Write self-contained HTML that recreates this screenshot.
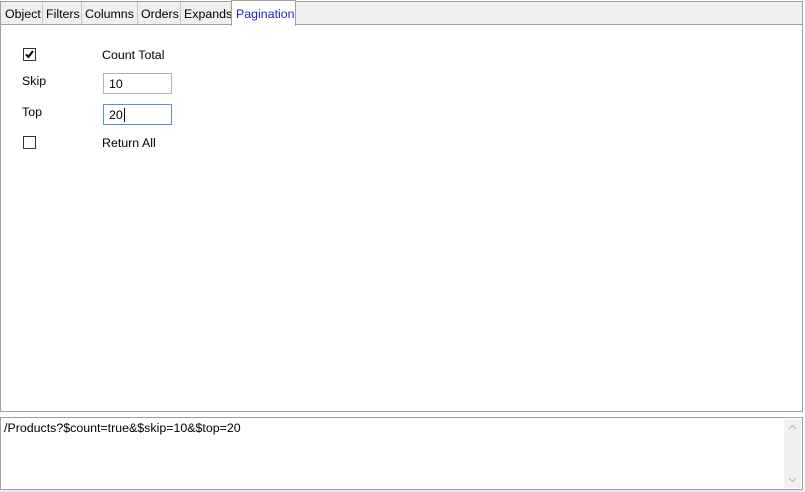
<!DOCTYPE html>
<html><head><style>
*{box-sizing:border-box;margin:0;padding:0}
body{width:805px;height:492px;background:#fff;font-family:"Liberation Sans",sans-serif;font-size:12.4px;color:#000;position:relative;overflow:hidden}
.strip{position:absolute;left:0;top:1px;width:803px;height:24px;background:#efefef;border:1px solid #a0a0a0;border-bottom:none}
.tab{position:absolute;top:2px;height:22px;border-right:1px solid #c8c8c8;padding-left:4px;line-height:24px;color:#000}
.sel{position:absolute;top:0;height:26px;left:231px;width:65px;background:#fff;border:1px solid #a0a0a0;border-bottom:none;color:#2222bb;line-height:27px;padding-left:4px}
.panel{position:absolute;left:0;top:24px;width:803px;height:388px;border:1px solid #a0a0a0;background:#fff}
.cb{position:absolute;left:23px;width:13px;height:13px;border:1px solid #333;background:#fff}
.lbl{position:absolute}
.inp{position:absolute;left:103px;width:69px;height:21px;border:1px solid #b4b4b4;padding-left:5px;line-height:21px}
.bot{position:absolute;left:0;top:417px;width:803px;height:73px;border:1px solid #a0a0a0;background:#fff;padding:3px 0 0 3px}
.sb{position:absolute;right:1px;top:1px;width:17px;height:69px;background:#f0f0f0}
.foot{position:absolute;left:0;top:490px;width:805px;height:2px;background:#e8ebf2}
</style></head><body>
<div class="strip"></div>
<div class="tab" style="left:0;width:43px;border-left:1px solid #a0a0a0">Object</div>
<div class="tab" style="left:42px;width:40px">Filters</div>
<div class="tab" style="left:81px;width:57px">Columns</div>
<div class="tab" style="left:137px;width:44px">Orders</div>
<div class="tab" style="left:180px;width:52px">Expands</div>
<div class="panel"></div>
<div class="sel">Pagination</div>
<div class="cb" style="top:48px"><svg width="11" height="11" viewBox="0 0 11 11" style="position:absolute;left:0;top:0"><path d="M2 5.5 L4.5 8 L9 2" stroke="#000" stroke-width="2" fill="none"/></svg></div>
<div class="lbl" style="left:102px;top:48px">Count Total</div>
<div class="lbl" style="left:22px;top:74px">Skip</div>
<div class="inp" style="top:73px">10</div>
<div class="lbl" style="left:22px;top:105px">Top</div>
<div class="inp" style="top:104px;border-color:#5a8fd0">20<span style="border-left:1px solid #000;margin-left:1px"></span></div>
<div class="cb" style="top:136px"></div>
<div class="lbl" style="left:102px;top:136px">Return All</div>
<div class="bot">/Products?$count=true&amp;$skip=10&amp;$top=20<div class="sb"><svg width="17" height="69" viewBox="0 0 17 69"><path d="M5 10 L8.5 6.5 L12 10" stroke="#bbb" stroke-width="1.2" fill="none"/><path d="M5 59 L8.5 62.5 L12 59" stroke="#bbb" stroke-width="1.2" fill="none"/></svg></div></div>
<div class="foot"></div>
</body></html>
